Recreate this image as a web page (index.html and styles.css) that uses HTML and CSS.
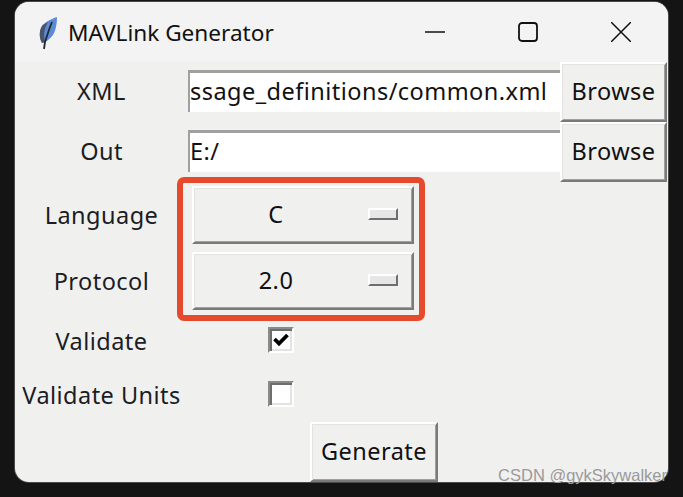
FILE: index.html
```html
<!DOCTYPE html>
<html lang="en">
<head>
<meta charset="utf-8">
<title>MAVLink Generator</title>
<link rel="stylesheet" href="styles.css">
</head>
<body>
<div class="window">
  <header class="titlebar">
    <svg class="app-icon" viewBox="0 0 18 32" width="18" height="32">
      <path d="M3 26C0 21 0 14 3 9 6 5 12 2 18 0 18 6 17 13 14 18 11 22 7 25 3 26Z" fill="#5b8ad6"/>
      <path d="M3 26C0 21 0 14 3 9 5 7 7 6 9 5 6 10 4 16 6 25Z" fill="#4a5568"/>
      <path d="M13 5C10 12 8 19 6 25L5 32" fill="none" stroke="#23262c" stroke-width="1.8"/>
    </svg>
    <span class="title">MAVLink Generator</span>
    <div class="controls">
      <svg class="ctl" viewBox="0 0 20 20" width="20" height="20"><path d="M0 10H20" stroke="#111" stroke-width="1.4" fill="none"/></svg>
      <svg class="ctl" viewBox="0 0 20 20" width="20" height="20"><rect x="1" y="1" width="18" height="18" rx="3" stroke="#111" stroke-width="1.8" fill="none"/></svg>
      <svg class="ctl" viewBox="0 0 20 20" width="20" height="20"><path d="M0 0L20 20M20 0L0 20" stroke="#111" stroke-width="1.5" fill="none"/></svg>
    </div>
  </header>
  <main class="form">
    <div class="label">XML</div>
    <input class="entry" type="text" value="ssage_definitions/common.xml" readonly>
    <div class="btn browse">Browse</div>

    <div class="label">Out</div>
    <input class="entry" type="text" value="E:/" readonly>
    <div class="btn browse">Browse</div>

    <div class="label label-low">Language</div>
    <div class="btn option"><span class="option-text">C</span><span class="indicator"></span></div>

    <div class="label label-low">Protocol</div>
    <div class="btn option"><span class="option-text">2.0</span><span class="indicator"></span></div>

    <div class="label label-low">Validate</div>
    <div class="check">
      <svg viewBox="0 0 16 16" width="16" height="16"><path d="M1.5 7L6 11.5L14.5 3" fill="none" stroke="#000" stroke-width="3.8"/></svg>
    </div>

    <div class="label label-low">Validate Units</div>
    <div class="check"></div>

    <div class="btn generate">Generate</div>
  </main>
  <div class="highlight"></div>
</div>
<div class="watermark">CSDN @gykSkywalker</div>
</body>
</html>
```
FILE: styles.css
```css
* { box-sizing: border-box; }
html, body { margin: 0; height: 100%; }
body {
  position: relative;
  width: 683px;
  height: 497px;
  overflow: hidden;
  padding: 2px 0 0 15px;
  background: #141414;
  font-family: "Noto Sans", "Open Sans", sans-serif;
  color: #111;
}
.window {
  position: relative;
  width: 653px;
  height: 480px;
  background: #f0f0ef;
  border-radius: 14px;
  overflow: hidden;
  box-shadow: 0 0 0 1px #4a4a4a;
}
.titlebar {
  display: flex;
  align-items: center;
  height: 60px;
  background: #f3f3f3;
  padding-left: 24px;
}
.app-icon { margin-right: 11px; margin-top: 1px; }
.title { font-size: 22.6px; color: #111; }
.controls {
  display: flex;
  gap: 73px;
  margin-left: auto;
  margin-right: 37px;
  align-items: center;
}
.ctl { display: block; }
.form {
  display: grid;
  grid-template-columns: 173px 186px 186px 107px;
  grid-template-rows: 60px 60px 66px 66px 54px 54px 60px;
  font-size: 23.5px;
  letter-spacing: 0.46px;
  line-height: 30px;
}
.label {
  grid-column: 1;
  display: flex;
  align-items: center;
  justify-content: center;
  padding-bottom: 2px;
  color: #1c1c24;
  white-space: nowrap;
}
.label-low { padding-bottom: 0; }
.entry {
  grid-column: span 2;
  margin: 8px 0 10px;
  width: 100%;
  min-width: 0;
  padding: 0 0 3px 0;
  background: #fff;
  border: 0;
  border-top: 3px solid #a0a0a0;
  border-left: 2px solid #a0a0a0;
  outline: none;
  font: inherit;
  letter-spacing: inherit;
  color: #111;
}
.btn {
  display: flex;
  align-items: center;
  justify-content: center;
  padding-bottom: 2px;
  background: #f0f0ef;
  border: 2px solid;
  border-color: #fff #7a7a7a #7a7a7a #fff;
  box-shadow: inset 1px 1px 0 #e3e3e3, inset -1px -1px 0 #a0a0a0;
  color: #111;
}
.browse { height: 60px; }
.option {
  grid-column: 2 / span 2;
  justify-self: start;
  width: 222px;
  height: 58px;
  margin: 4px 0 0 4px;
  padding-right: 14px;
}
.option-text { flex: 1; padding-right: 6px; text-align: center; }
.indicator {
  width: 30px;
  height: 12px;
  margin-left: 4px;
  background: #e6e6e6;
  border: 2px solid;
  border-color: #fff #6e6e6e #6e6e6e #fff;
}
.check {
  grid-column: 2;
  justify-self: center;
  align-self: center;
  display: flex;
  align-items: center;
  justify-content: center;
  width: 26px;
  height: 26px;
  margin-bottom: 2px;
  background: #fff;
  border: 2px solid;
  border-color: #8a8a8a #fff #fff #8a8a8a;
  box-shadow: inset 2px 2px 0 #6e6e6e, inset -2px -2px 0 #e3e3e3;
}
.generate {
  grid-column: 2 / span 2;
  grid-row: 7;
  justify-self: center;
  width: 128px;
  height: 60px;
}
.highlight {
  position: absolute;
  left: 162px;
  top: 175px;
  width: 248px;
  height: 144px;
  border: 6px solid #e64a2c;
  border-radius: 7px;
}
.watermark {
  position: absolute;
  right: 16px;
  top: 466px;
  font-family: "Liberation Sans", sans-serif;
  font-size: 16.5px;
  color: #9a9a9a;
  white-space: nowrap;
}
```
